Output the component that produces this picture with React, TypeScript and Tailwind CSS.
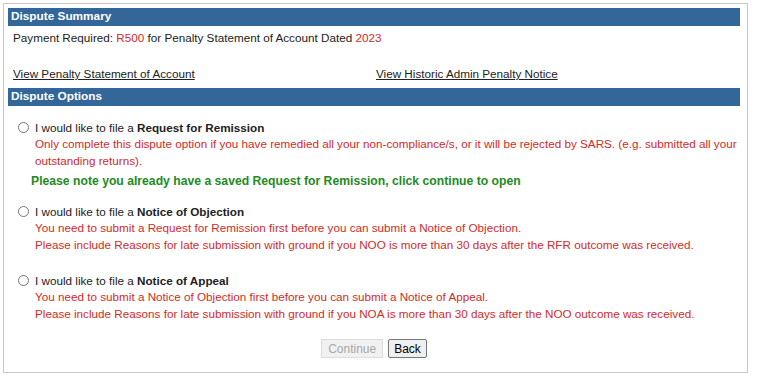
import React from "react";

const red = "text-[#d42a2a]";

function Bar({ title }: { title: string }) {
  return (
    <div className="bg-[#336699] h-[18px] px-[3px] flex items-center text-white font-bold text-[11.8px] leading-none">
      {title}
    </div>
  );
}

function Option({
  name,
  lines,
  extra,
}: {
  name: string;
  lines: React.ReactNode[];
  extra?: React.ReactNode;
}) {
  return (
    <div className="pl-[10px]">
      <div className="flex items-center h-[17px]">
        <span className="w-[11px] h-[11px] rounded-full border border-[#767676] bg-white mr-[6px]" />
        <span>
          I would like to file a <b>{name}</b>
        </span>
      </div>
      <div className={`pl-[17px] ${red} leading-[16.5px]`}>
        {lines.map((l, i) => (
          <div key={i}>{l}</div>
        ))}
      </div>
      {extra}
    </div>
  );
}

export default function App() {
  return (
    <div
      className="w-[760px] h-[378px] bg-white pt-[3px] pl-[3px] text-[11.7px] text-[#222]"
      style={{ fontFamily: '"Liberation Sans", Arial, sans-serif' }}
    >
      <div className="w-[745px] h-[370px] border border-[#c8c8c8] pt-[4px] pl-[4px]">
        <div className="w-[732px]">
          <Bar title="Dispute Summary" />
          <div className="px-[5px] pt-[4px] h-[26px] leading-[16px]">
            Payment Required: <span className={red}>R500</span> for Penalty Statement of Account Dated{" "}
            <span className={red}>2023</span>
          </div>
          <div className="grid grid-cols-2 h-[36px] items-end pb-[6px] leading-[16px]">
            <a href="#" className="underline pl-[5px] text-[#222]">
              View Penalty Statement of Account
            </a>
            <a href="#" className="underline pl-[2px] text-[#222]">
              View Historic Admin Penalty Notice
            </a>
          </div>
          <Bar title="Dispute Options" />
          <div className="pt-[13px] flex flex-col">
            <Option
              name="Request for Remission"
              lines={[
                "Only complete this dispute option if you have remedied all your non-compliance/s, or it will be rejected by SARS. (e.g. submitted all your outstanding returns).",
              ]}
              extra={
                <div className="pl-[13px] pt-[4px] font-bold text-[12.2px] text-[#228b22] leading-[16px]">
                  Please note you already have a saved Request for Remission, click continue to open
                </div>
              }
            />
            <div className="h-[14px]" />
            <Option
              name="Notice of Objection"
              lines={[
                "You need to submit a Request for Remission first before you can submit a Notice of Objection.",
                "Please include Reasons for late submission with ground if you NOO is more than 30 days after the RFR outcome was received.",
              ]}
            />
            <div className="h-[19px]" />
            <Option
              name="Notice of Appeal"
              lines={[
                "You need to submit a Notice of Objection first before you can submit a Notice of Appeal.",
                "Please include Reasons for late submission with ground if you NOA is more than 30 days after the NOO outcome was received.",
              ]}
            />
          </div>
          <div className="flex justify-center gap-[5px] pt-[17px]">
            <button
              disabled
              className="h-[19px] px-[6px] border border-[#dcdcdc] bg-[#f1f1f1] text-[#a8a8a8] text-[12px] leading-none"
            >
              Continue
            </button>
            <button className="h-[19px] px-[5px] border border-[#767676] rounded-[2px] bg-[#efefef] text-black text-[12px] leading-none">
              Back
            </button>
          </div>
        </div>
      </div>
    </div>
  );
}
